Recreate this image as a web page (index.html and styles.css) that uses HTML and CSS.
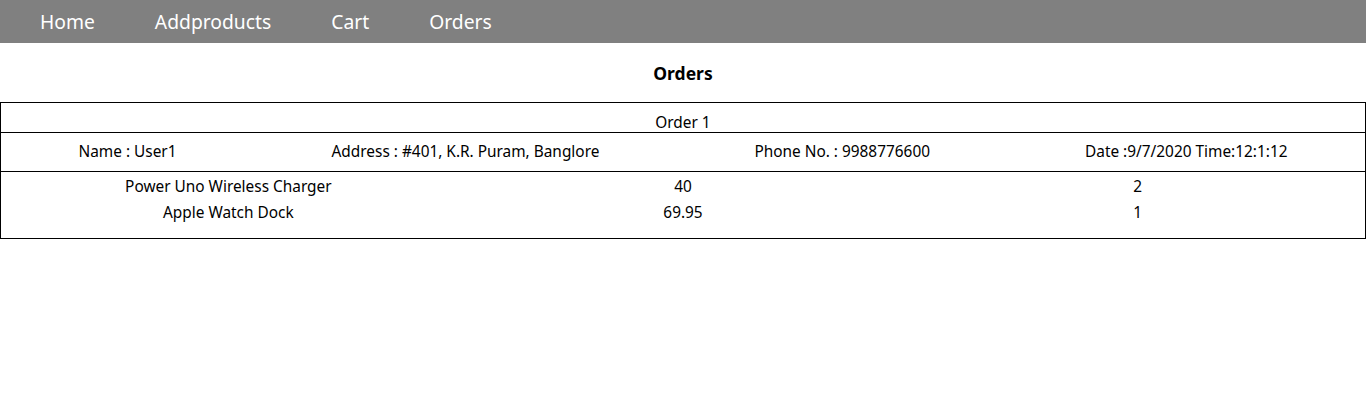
FILE: index.html
```html
<!DOCTYPE html>
<html>
<head>
<meta charset="utf-8">
<link rel="stylesheet" href="styles.css">
</head>
<body>
<nav class="navbar">
  <a class="nav-link" href="#">Home</a>
  <a class="nav-link" href="#">Addproducts</a>
  <a class="nav-link" href="#">Cart</a>
  <a class="nav-link" href="#">Orders</a>
</nav>
<h1 class="page-title">Orders</h1>
<div class="order">
  <div class="order-head">Order 1</div>
  <div class="order-info">
    <span class="info-cell">Name : User1</span>
    <span class="info-cell">Address : #401, K.R. Puram, Banglore</span>
    <span class="info-cell">Phone No. : 9988776600</span>
    <span class="info-cell">Date :9/7/2020 Time:12:1:12</span>
  </div>
  <div class="order-items">
    <div class="item-row">
      <span class="item-cell">Power Uno Wireless Charger</span>
      <span class="item-cell">40</span>
      <span class="item-cell">2</span>
    </div>
    <div class="item-row">
      <span class="item-cell">Apple Watch Dock</span>
      <span class="item-cell">69.95</span>
      <span class="item-cell">1</span>
    </div>
  </div>
</div>
</body>
</html>
```

FILE: styles.css
```css
* { box-sizing: border-box; }
body {
  margin: 0;
  font-family: "Noto Sans", "DejaVu Sans", sans-serif;
  font-size: 15.4px;
  color: #000;
  background: #fff;
}
.navbar {
  display: flex;
  height: 43px;
  background: #808080;
  padding-left: 10px;
  align-items: center;
}
.nav-link {
  color: #fff;
  text-decoration: none;
  font-size: 19.3px;
  padding: 0 30px;
}
.page-title {
  margin: 0;
  height: 59px;
  font-size: 17.5px;
  font-weight: bold;
  text-align: center;
  line-height: 60px;
}
.order {
  border: 1px solid #000;
}
.order-head {
  text-align: center;
  padding-top: 11px;
  height: 30px;
  line-height: 18px;
  border-bottom: 1px solid #000;
}
.order-info {
  display: flex;
  height: 39px;
  align-items: center;
  padding-bottom: 1px;
  border-bottom: 1px solid #000;
}
.info-cell {
  flex: 1 1 auto;
  text-align: center;
}
.order-items {
  padding: 2px 0 12px;
}
.item-row {
  display: flex;
  line-height: 26px;
}
.item-cell {
  flex: 1 1 0;
  text-align: center;
}
```
